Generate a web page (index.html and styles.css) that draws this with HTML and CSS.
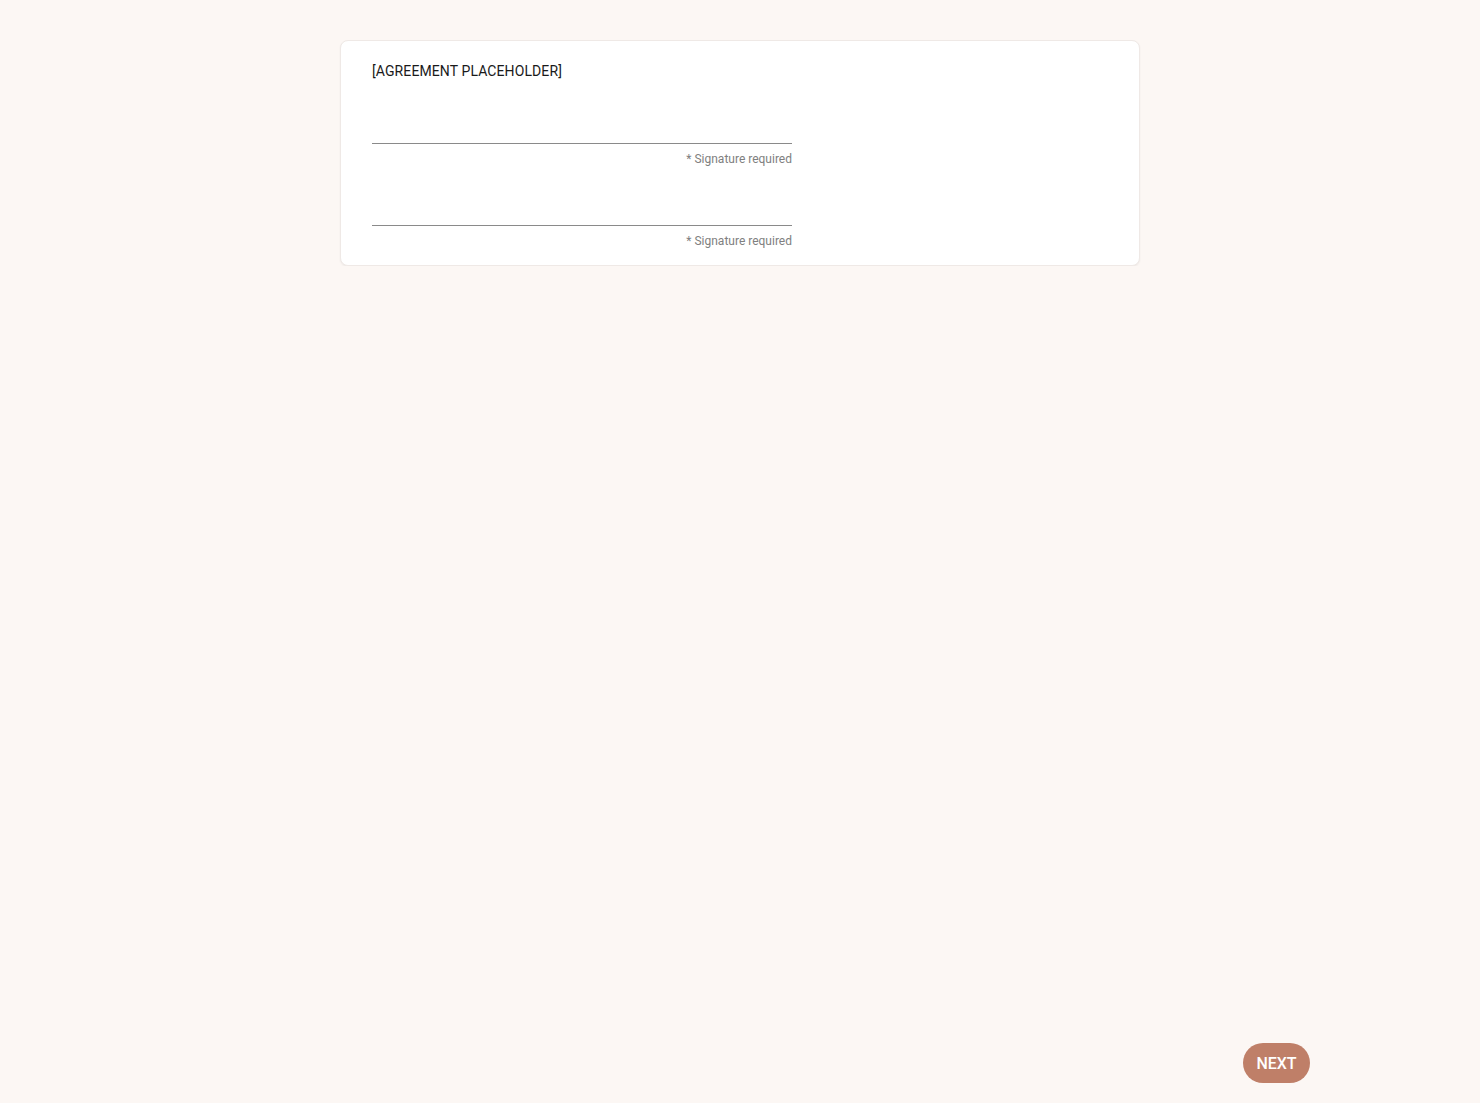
FILE: index.html
```html
<!DOCTYPE html>
<html>
<head>
<meta charset="utf-8">
<link rel="stylesheet" href="styles.css">
</head>
<body>
<main class="page">
  <section class="card">
    <h1 class="title">[AGREEMENT PLACEHOLDER]</h1>
    <div class="sig sig-first">
      <div class="sig-pad"></div>
      <div class="sig-note">* Signature required</div>
    </div>
    <div class="sig">
      <div class="sig-pad"></div>
      <div class="sig-note">* Signature required</div>
    </div>
  </section>
</main>
<button class="next">NEXT</button>
</body>
</html>
```
FILE: styles.css
```css
html, body {
  margin: 0;
  padding: 0;
  background: #fcf7f4;
  font-family: "Roboto", "Noto Sans", sans-serif;
  color: #1a1a1a;
}
.page {
  display: flex;
  justify-content: center;
  padding-top: 40px;
}
.card {
  width: 800px;
  box-sizing: border-box;
  background: #ffffff;
  border: 1px solid #efe9e6;
  border-radius: 8px;
  box-shadow: 0 1px 2px rgba(0,0,0,0.06);
  padding: 20px 31px 15px;
}
.title {
  margin: 0;
  font-size: 14px;
  line-height: 20px;
  font-weight: 400;
  letter-spacing: 0.1px;
}
.sig {
  width: 420px;
}
.sig-pad {
  height: 57px;
  border-bottom: 1px solid #8a8a8a;
}
.sig-first .sig-pad {
  height: 62px;
}
.sig-note {
  margin-top: 7px;
  margin-bottom: 1px;
  text-align: right;
  font-size: 12px;
  line-height: 16px;
  color: #808080;
}
.next {
  position: fixed;
  left: 1243px;
  top: 1043px;
  width: 67px;
  height: 40px;
  border: none;
  border-radius: 20px;
  background: #bf7f68;
  color: #ffffff;
  font-family: "Roboto", "Noto Sans", sans-serif;
  font-size: 16px;
  font-weight: 500;
  padding: 0;
  cursor: pointer;
}
```
